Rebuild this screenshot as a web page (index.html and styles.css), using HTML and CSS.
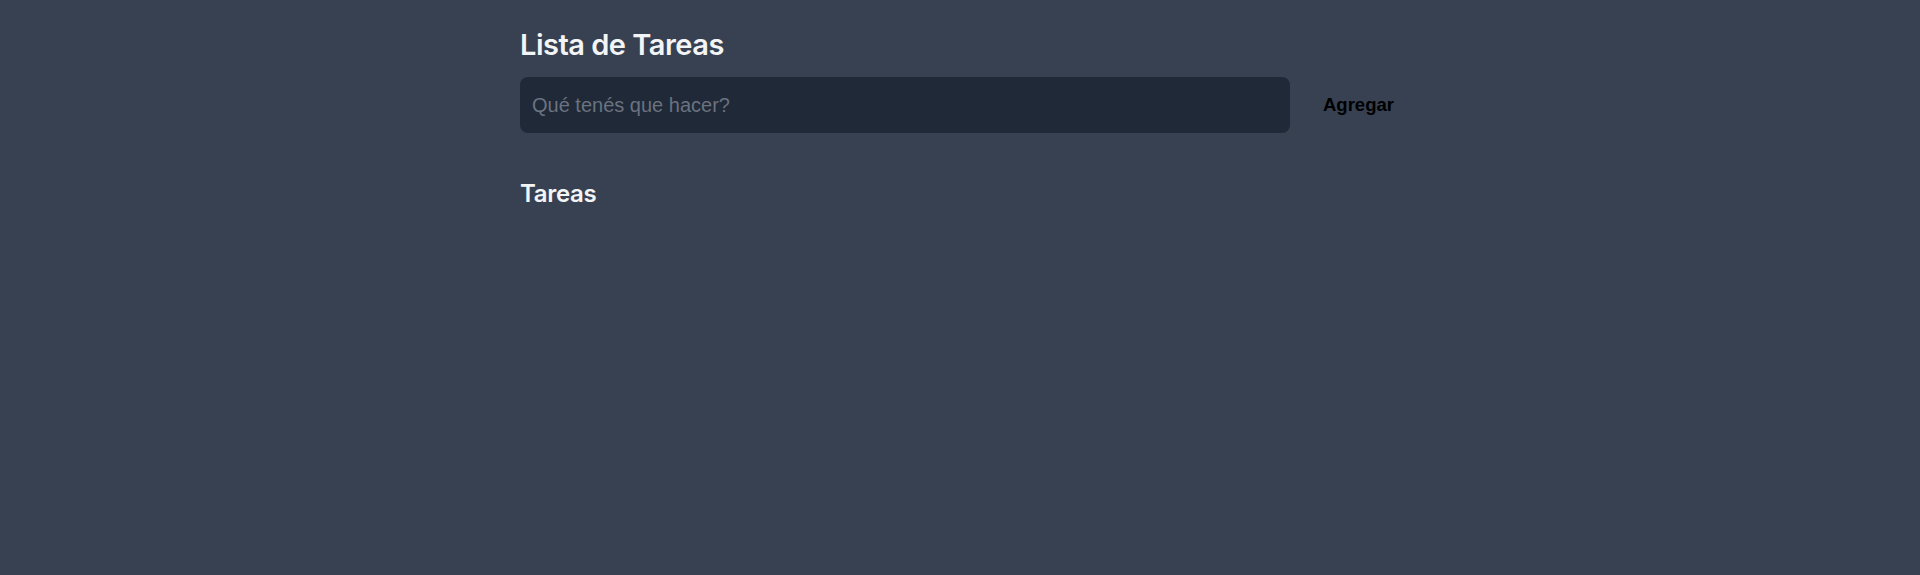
FILE: index.html
```html
<!DOCTYPE html>
<html lang="es">
<head>
<meta charset="utf-8">
<title>Lista de Tareas</title>
<link rel="stylesheet" href="styles.css">
</head>
<body>
<main class="container">
  <h1 class="title">Lista de Tareas</h1>
  <form class="task-form">
    <input class="task-input" type="text" placeholder="Qué tenés que hacer?">
    <button class="add-btn" type="button">Agregar</button>
  </form>
  <h2 class="subtitle">Tareas</h2>
  <ul class="task-list"></ul>
</main>
</body>
</html>
```
FILE: styles.css
```css
html, body {
  margin: 0;
  padding: 0;
  background: #374151;
  min-height: 100%;
}
body {
  height: 575px;
  font-family: "Liberation Sans", Arial, sans-serif;
}
.container {
  width: 880px;
  margin: 0 auto;
  padding-top: 25px;
}
.title {
  margin: 0;
  font-family: Inter, "Noto Sans", sans-serif;
  font-weight: 600;
  font-size: 29px;
  line-height: 40px;
  color: #f3f4f6;
  letter-spacing: -0.5px;
}
.task-form {
  display: flex;
  align-items: center;
  margin-top: 12px;
}
.task-input {
  width: 770px;
  height: 56px;
  box-sizing: border-box;
  border: none;
  outline: none;
  border-radius: 8px;
  background: #1f2937;
  padding: 0 12px;
  font-family: "Liberation Sans", Arial, sans-serif;
  font-size: 20px;
  color: #e5e7eb;
}
.task-input::placeholder {
  color: #6b7280;
}
.add-btn {
  margin-left: 33px;
  padding: 0;
  border: none;
  background: transparent;
  font-family: "Liberation Sans", Arial, sans-serif;
  font-weight: 700;
  font-size: 18.5px;
  color: #000;
}
.subtitle {
  margin: 45px 0 0;
  font-family: Inter, "Noto Sans", sans-serif;
  font-weight: 600;
  font-size: 24px;
  line-height: 32px;
  color: #f3f4f6;
  letter-spacing: -0.3px;
}
.task-list {
  list-style: none;
  margin: 0;
  padding: 0;
}
```
